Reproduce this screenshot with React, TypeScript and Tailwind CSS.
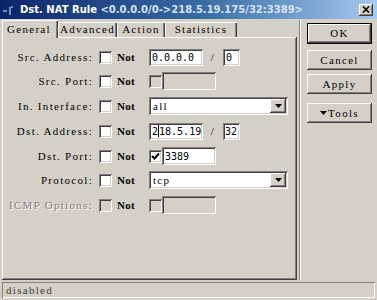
import React from "react";

const raised =
  "shadow-[inset_-1px_-1px_#404040,inset_1px_1px_#ffffff,inset_-2px_-2px_#808080,inset_2px_2px_#d4d0c8]";
const sunken =
  "shadow-[inset_1px_1px_#808080,inset_-1px_-1px_#ffffff,inset_2px_2px_#404040,inset_-2px_-2px_#d4d0c8]";
const mono = "font-['Liberation_Serif',serif] text-[11px] tracking-[1.3px]";
const val = "font-['DejaVu_Sans_Mono',monospace] text-[10px]";

function Check({ checked = false, disabled = false }: { checked?: boolean; disabled?: boolean }) {
  return (
    <div
      className={`w-[13px] h-[13px] shrink-0 flex items-center justify-center ${sunken} ${
        disabled ? "bg-[#d4d0c8]" : "bg-white"
      }`}
    >
      {checked && (
        <svg width="9" height="9" viewBox="0 0 9 9">
          <path d="M1 4 L3.5 6.5 L8 1.5" stroke="#000" strokeWidth="2" fill="none" />
        </svg>
      )}
    </div>
  );
}

function Label({ text, disabled = false }: { text: string; disabled?: boolean }) {
  return (
    <div
      className={`w-[91px] text-right ${mono} ${
        disabled ? "text-[#808080] [text-shadow:1px_1px_#ffffff]" : "text-black"
      }`}
    >
      {text}
    </div>
  );
}

function Not() {
  return (
    <div className="ml-[5px] w-[32px] font-['Liberation_Serif',serif] text-[11px] tracking-[0.3px] font-bold text-black">
      Not
    </div>
  );
}

function Select({ value }: { value: string }) {
  return (
    <div className={`w-[139px] h-[18px] bg-white ${sunken} flex items-center pl-[4px] pr-[2px]`}>
      <span className={`${mono} flex-1`}>{value}</span>
      <div className={`w-[16px] h-[14px] bg-[#d4d0c8] ${raised} flex items-center justify-center`}>
        <svg width="7" height="4" viewBox="0 0 7 4">
          <path d="M0 0 H7 L3.5 4 Z" fill="#000" />
        </svg>
      </div>
    </div>
  );
}

function Btn({ children, def = false, h }: { children: React.ReactNode; def?: boolean; h: string }) {
  return (
    <div
      className={`w-[65px] ${h} bg-[#d4d0c8] flex items-center justify-center ${mono} text-black ${
        def
          ? "shadow-[inset_0_0_0_1px_#000000,inset_-2px_-2px_#404040,inset_2px_2px_#ffffff,inset_-3px_-3px_#808080]"
          : raised
      }`}
    >
      {children}
    </div>
  );
}

const tabShadow = "shadow-[inset_1px_1px_#ffffff,inset_-1px_0_#404040,inset_-2px_0_#808080]";

export default function App() {
  return (
    <div className="w-[377px] h-[300px] bg-[#d4d0c8] flex flex-col overflow-hidden">
      {/* Title bar */}
      <div className="h-[19px] bg-[linear-gradient(to_right,#0a246a,#3a6ea5_55%,#a6caf0)] flex items-center pl-[2px] pr-[4px]">
        <svg width="12" height="12" viewBox="0 0 12 12" className="shrink-0">
          <path d="M1 7 H5" stroke="#c8d4f0" strokeWidth="1.2" />
          <path d="M8 3 V11" stroke="#c8d4f0" strokeWidth="1.2" />
          <path d="M10 2 V4" stroke="#e0e8ff" strokeWidth="1" />
        </svg>
        <div className="ml-[6px] flex-1 font-['DejaVu_Sans',sans-serif] text-[10px] font-bold whitespace-nowrap">
          <span className="text-white">Dst. NAT Rule </span>
          <span className="text-[#d6e2f4]">&lt;0.0.0.0/0-&gt;218.5.19.175/32:3389&gt;</span>
        </div>
        <div className={`w-[14px] h-[12px] bg-[#d4d0c8] ${raised} flex items-center justify-center`}>
          <svg width="8" height="7" viewBox="0 0 8 7">
            <path d="M1 0.5 L7 6.5 M7 0.5 L1 6.5" stroke="#000" strokeWidth="1.6" />
          </svg>
        </div>
      </div>

      {/* Main */}
      <div className="h-[262px] flex">
        <div className="w-[297px] pl-[2px] pt-[1px] flex flex-col">
          {/* Tabs */}
          <div className="h-[17px] flex items-end relative z-10">
            <div
              className={`w-[56px] h-[18px] bg-[#d4d0c8] ${tabShadow} flex items-center pl-[5px] ${mono} text-black -mb-[1px]`}
            >
              General
            </div>
            <div className={`w-[59px] h-[15px] ${tabShadow} flex items-center justify-center ${mono} text-black`}>
              Advanced
            </div>
            <div className={`w-[48px] h-[15px] ${tabShadow} flex items-center justify-center ${mono} text-black`}>
              Action
            </div>
            <div className={`w-[72px] h-[15px] ${tabShadow} flex items-center justify-center ${mono} text-black`}>
              Statistics
            </div>
          </div>

          {/* Panel */}
          <div className={`h-[243px] ${raised} flex flex-col pt-[11px]`}>
            {/* Src. Address */}
            <div className="h-[18px] flex items-center">
              <Label text="Src. Address:" />
              <div className="ml-[6px]">
                <Check />
              </div>
              <Not />
              <div className={`w-[54px] h-[17px] bg-white ${sunken} flex items-center pl-[3px] ${val}`}>0.0.0.0</div>
              <div className={`w-[20px] text-center ${mono}`}>/</div>
              <div className={`w-[17px] h-[17px] bg-white ${sunken} flex items-center pl-[3px] ${val}`}>0</div>
            </div>

            {/* Src. Port */}
            <div className="h-[18px] mt-[6px] flex items-center">
              <Label text="Src. Port:" />
              <div className="ml-[6px]">
                <Check />
              </div>
              <Not />
              <Check disabled />
              <div className={`w-[54px] h-[18px] bg-[#d4d0c8] ${sunken}`} />
            </div>

            {/* In. Interface */}
            <div className="h-[18px] mt-[7px] flex items-center">
              <Label text="In. Interface:" />
              <div className="ml-[6px]">
                <Check />
              </div>
              <Not />
              <Select value="all" />
            </div>

            {/* Dst. Address */}
            <div className="h-[18px] mt-[7px] flex items-center">
              <Label text="Dst. Address:" />
              <div className="ml-[6px]">
                <Check />
              </div>
              <Not />
              <div className={`w-[54px] h-[17px] bg-white ${sunken} flex items-center pl-[3px] ${val}`}>
                2<span className="inline-block w-[1px] h-[12px] bg-black" />18.5.19
              </div>
              <div className={`w-[20px] text-center ${mono}`}>/</div>
              <div className={`w-[17px] h-[17px] bg-white ${sunken} flex items-center pl-[2px] ${val}`}>32</div>
            </div>

            {/* Dst. Port */}
            <div className="h-[18px] mt-[7px] flex items-center">
              <Label text="Dst. Port:" />
              <div className="ml-[6px]">
                <Check />
              </div>
              <Not />
              <Check checked />
              <div className={`w-[54px] h-[18px] bg-white ${sunken} flex items-center pl-[3px] ${val}`}>3389</div>
            </div>

            {/* Protocol */}
            <div className="h-[18px] mt-[6px] flex items-center">
              <Label text="Protocol:" />
              <div className="ml-[6px]">
                <Check />
              </div>
              <Not />
              <Select value="tcp" />
            </div>

            {/* ICMP Options */}
            <div className="h-[18px] mt-[7px] flex items-center">
              <Label text="ICMP Options:" disabled />
              <div className="ml-[6px]">
                <Check disabled />
              </div>
              <Not />
              <Check disabled />
              <div className={`w-[54px] h-[18px] bg-[#d4d0c8] ${sunken}`} />
            </div>
          </div>
        </div>

        {/* Separator */}
        <div className="ml-[2px] mt-[1px] w-[2px] h-[260px] border-l border-l-[#808080] border-r border-r-white" />

        {/* Buttons */}
        <div className="pl-[6px] flex flex-col">
          <div className="mt-[4px]">
            <Btn def h="h-[21px]">
              OK
            </Btn>
          </div>
          <div className="mt-[6px]">
            <Btn h="h-[20px]">Cancel</Btn>
          </div>
          <div className="mt-[4px]">
            <Btn h="h-[20px]">Apply</Btn>
          </div>
          <div className="mt-[9px]">
            <Btn h="h-[20px]">
              <svg width="7" height="4" viewBox="0 0 7 4" className="mr-[1px]">
                <path d="M0 0 H7 L3.5 4 Z" fill="#000" />
              </svg>
              Tools
            </Btn>
          </div>
        </div>
      </div>

      {/* Status bar */}
      <div className="mt-[1px] mx-[2px] h-[16px] shadow-[inset_1px_1px_#808080,inset_-1px_-1px_#ffffff] flex items-center pl-[4px]">
        <span className={`${mono} text-[#404040]`}>disabled</span>
      </div>
    </div>
  );
}
